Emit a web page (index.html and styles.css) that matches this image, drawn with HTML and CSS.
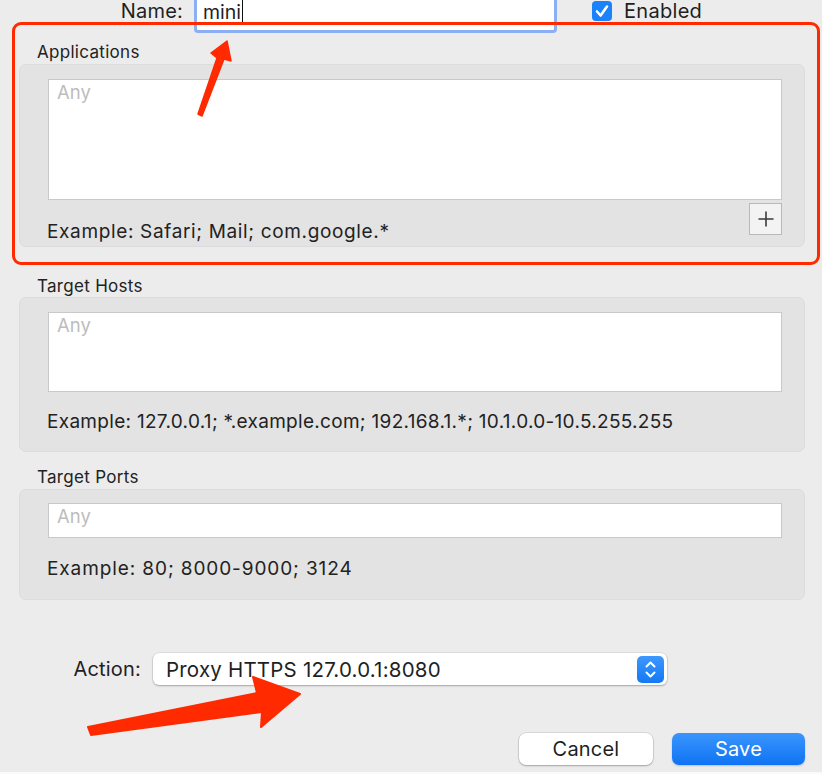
FILE: index.html
```html
<!DOCTYPE html>
<html>
<head>
<meta charset="utf-8">
<link rel="stylesheet" href="styles.css">
</head>
<body>
<div class="page">
  <div class="name-row">
    <label class="name-label">Name:</label>
    <div class="name-input"><span class="name-text">mini</span><span class="caret"></span></div>
    <span class="checkbox">
      <svg width="20" height="20" viewBox="0 0 20 20"><path d="M5 10.5 L8.6 14.5 L15 5.5" fill="none" stroke="#fff" stroke-width="2.6" stroke-linecap="round" stroke-linejoin="round"/></svg>
    </span>
    <span class="enabled">Enabled</span>
  </div>

  <div class="sec-label sec-apps">Applications</div>
  <div class="group group-apps">
    <div class="field field-apps"><span class="ph">Any</span></div>
    <div class="example-row">
      <span class="example example-apps">Example: Safari; Mail; com.google.*</span>
      <span class="plus-btn">
        <svg width="18" height="18" viewBox="0 0 18 18"><path d="M9 1.5 V16.5 M1.5 9 H16.5" stroke="#3a3a3a" stroke-width="1.6"/></svg>
      </span>
    </div>
  </div>

  <div class="sec-label sec-hosts">Target Hosts</div>
  <div class="group group-hosts">
    <div class="field field-hosts"><span class="ph">Any</span></div>
    <div class="example example-hosts">Example: 127.0.0.1; *.example.com; 192.168.1.*; 10.1.0.0-10.5.255.255</div>
  </div>

  <div class="sec-label sec-ports">Target Ports</div>
  <div class="group group-ports">
    <div class="field field-ports"><span class="ph">Any</span></div>
    <div class="example example-ports">Example: 80; 8000-9000; 3124</div>
  </div>

  <div class="action-row">
    <span class="action-label">Action:</span>
    <div class="select">
      <span class="select-text">Proxy HTTPS 127.0.0.1:8080</span>
      <span class="stepper">
        <svg width="27" height="27" viewBox="0 0 27 27"><path d="M9.5 10.5 L13.5 6.5 L17.5 10.5 M9.5 16.5 L13.5 20.5 L17.5 16.5" fill="none" stroke="#fff" stroke-width="2" stroke-linecap="round" stroke-linejoin="round"/></svg>
      </span>
    </div>
  </div>

  <div class="button-row">
    <span class="btn btn-cancel">Cancel</span>
    <span class="btn btn-save">Save</span>
  </div>

  <div class="bottom-strip"></div>

  <div class="highlight"></div>
  <svg class="arrows" width="822" height="774" viewBox="0 0 822 774">
    <polygon points="198,114 217,58 211,53 227,41 231,61 224,59 202,116" fill="#ff2a00" stroke="#ff2a00" stroke-width="1.5" stroke-linejoin="round"/>
    <polygon points="88,727 257,693 253,677 300,694 261,727 262,712 91,735" fill="#ff2a00" stroke="#ff2a00" stroke-width="2" stroke-linejoin="round"/>
  </svg>
</div>
</body>
</html>
```

FILE: styles.css
```css
* { box-sizing: border-box; }
html, body { margin: 0; padding: 0; }
body {
  background: #ececec;
  font-family: Inter, "Liberation Sans", Arial, sans-serif;
  color: #222;
  width: 822px;
  height: 774px;
  overflow: hidden;
}
.page {
  position: relative;
  width: 822px;
  height: 774px;
}

/* name row */
.name-row {
  display: flex;
  align-items: flex-start;
  height: 33px;
}
.name-label {
  width: 183px;
  text-align: right;
  font-size: 20px;
  letter-spacing: 0.2px;
  line-height: 22px;
  color: #1f1f1f;
}
.name-input {
  margin-left: 11px;
  margin-top: -11px;
  width: 363px;
  height: 44px;
  background: #fff;
  border: 3px solid #8ab0f3;
  border-radius: 4px;
  display: flex;
  align-items: flex-end;
  padding: 0 0 7px 6px;
}
.name-text {
  font-size: 19.5px;
  line-height: 22px;
  color: #1f1f1f;
}
.caret {
  width: 1px;
  height: 23px;
  background: #111;
  margin-left: 1px;
}
.checkbox {
  margin-left: 35px;
  margin-top: 1px;
  width: 20px;
  height: 20px;
  border-radius: 4px;
  background: #1a82fb;
  display: flex;
}
.enabled {
  margin-left: 12px;
  font-size: 20px;
  letter-spacing: 0.3px;
  line-height: 22px;
  color: #1f1f1f;
}

/* sections */
.sec-label {
  padding-left: 37px;
  font-size: 17px;
  letter-spacing: 0.3px;
  line-height: 20px;
  color: #222;
}
.sec-apps { margin-top: 9px; margin-bottom: 2px; }
.sec-hosts { margin-top: 29px; margin-bottom: 1px; }
.sec-ports { margin-top: 15px; margin-bottom: 2px; }

.group {
  margin-left: 19px;
  width: 786px;
  background: #e3e3e3;
  border: 1px solid #dcdcdc;
  border-radius: 7px;
  padding: 14px 22px 0 28px;
}
.group-apps { padding-bottom: 3px; }
.group-hosts { padding-bottom: 18px; }
.group-ports { padding-top: 13px; padding-bottom: 19px; }

.field {
  background: #fff;
  border: 1.5px solid #c9c9c9;
  padding: 1px 0 0 8px;
}
.field-apps { height: 121px; }
.field-hosts { height: 80px; }
.field-ports { height: 35px; }
.ph {
  font-size: 18.5px;
  line-height: 22px;
  color: #bdbdbd;
}

.example-row {
  display: flex;
  justify-content: space-between;
  align-items: flex-start;
}
.example {
  font-size: 19px;
  letter-spacing: 0.3px;
  line-height: 22px;
  color: #222;
  margin-left: -1px;
}
.example-apps { margin-top: 21px; letter-spacing: 0.65px; }
.example-hosts { margin-top: 19px; }
.example-ports { margin-top: 20px; letter-spacing: 0.9px; }

.plus-btn {
  margin-top: 3px;
  width: 33px;
  height: 32px;
  background: #f3f3f3;
  border: 1.5px solid #b9b9b9;
  display: flex;
  align-items: center;
  justify-content: center;
}

/* action */
.action-row {
  display: flex;
  align-items: center;
  margin-top: 53px;
  height: 32px;
}
.action-label {
  width: 141px;
  text-align: right;
  font-size: 20px;
  letter-spacing: 0.2px;
  color: #222;
}
.select {
  margin-left: 12px;
  width: 514px;
  height: 32px;
  background: #fff;
  border-radius: 6px;
  box-shadow: 0 0 0 0.5px rgba(0,0,0,0.12), 0 1px 2px rgba(0,0,0,0.25);
  display: flex;
  align-items: center;
  justify-content: space-between;
  padding: 0 3px 0 13px;
}
.select-text {
  font-size: 20.5px;
  letter-spacing: 0.2px;
  color: #1f1f1f;
}
.stepper {
  width: 27px;
  height: 27px;
  border-radius: 5px;
  background: linear-gradient(#3d97fd, #1479f6);
  display: flex;
}

/* buttons */
.button-row {
  display: flex;
  justify-content: flex-end;
  gap: 19px;
  padding-right: 17px;
  margin-top: 48px;
}
.btn {
  height: 32px;
  border-radius: 7px;
  display: flex;
  align-items: center;
  justify-content: center;
  font-size: 20px;
  letter-spacing: 0.2px;
}
.btn-cancel {
  width: 134px;
  background: #fff;
  color: #1f1f1f;
  box-shadow: 0 0 0 0.5px rgba(0,0,0,0.15), 0 1px 2px rgba(0,0,0,0.25);
}
.btn-save {
  width: 133px;
  background: linear-gradient(#3a95fd, #0f73f3);
  color: #fff;
  box-shadow: 0 1px 2px rgba(0,0,0,0.2);
}

.bottom-strip {
  margin-top: 7px;
  height: 3px;
  background: #fafafa;
}

/* annotations */
.highlight {
  position: absolute;
  left: 12px;
  top: 22px;
  width: 808px;
  height: 243px;
  border: 3px solid #ff2a00;
  border-radius: 9px;
}
.arrows {
  position: absolute;
  left: 0;
  top: 0;
}
```
